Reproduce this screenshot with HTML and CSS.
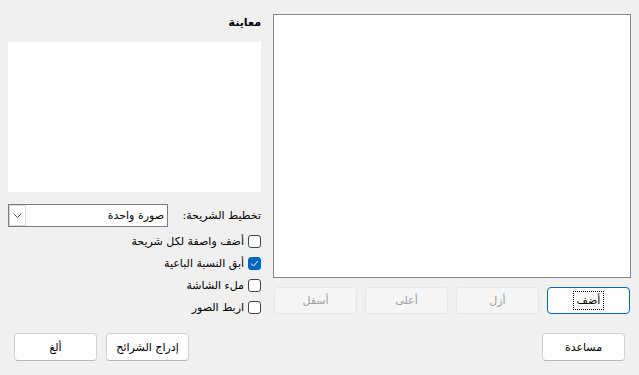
FILE: index.html
```html
<!DOCTYPE html>
<html lang="ar" dir="rtl">
<head>
<meta charset="utf-8">
<link rel="stylesheet" href="styles.css">
</head>
<body>
<div class="dialog">
  <div class="main">
    <div class="right-col">
      <div class="listbox"></div>
      <div class="btn-row">
        <button class="btn default"><span class="focus">أضف</span></button>
        <button class="btn disabled">أزل</button>
        <button class="btn disabled">أعلى</button>
        <button class="btn disabled">أسفل</button>
      </div>
    </div>
    <div class="left-col">
      <div class="heading">معاينة</div>
      <div class="preview"></div>
      <div class="layout-row">
        <span class="label">تخطيط الشريحة:</span>
        <div class="combo">
          <span class="combo-text">صورة واحدة</span>
          <span class="combo-btn"><svg width="9" height="5" viewBox="0 0 9 5"><path d="M0.5 0.5 L4.5 4.5 L8.5 0.5" fill="none" stroke="#555" stroke-width="1"/></svg></span>
        </div>
      </div>
      <div class="checks">
        <div class="check"><span class="box"></span><span>أضف واصفة لكل شريحة</span></div>
        <div class="check"><span class="box checked"><svg width="9" height="7" viewBox="0 0 9 7"><path d="M1 3.5 L3.5 6 L8 1" fill="none" stroke="#fff" stroke-width="1"/></svg></span><span>أبق النسبة الباعية</span></div>
        <div class="check"><span class="box"></span><span>ملء الشاشة</span></div>
        <div class="check"><span class="box"></span><span>اربط الصور</span></div>
      </div>
    </div>
  </div>
  <div class="footer">
    <button class="btn">مساعدة</button>
    <div class="footer-left">
      <button class="btn">إدراج الشرائح</button>
      <button class="btn">ألغ</button>
    </div>
  </div>
</div>
</body>
</html>
```
FILE: styles.css
```css
html, body {
  margin: 0;
  padding: 0;
  background: #f0f0f0;
}
body {
  width: 639px;
  height: 375px;
  overflow: hidden;
  font-family: "DejaVu Sans", "Noto Sans", sans-serif;
  font-size: 11px;
  color: #000;
}
.dialog {
  display: flex;
  flex-direction: column;
  height: 375px;
}
.main {
  display: flex;
  flex-direction: row;
  gap: 12px;
  padding: 14px 8px 0 8px;
}
.right-col {
  width: 358px;
  display: flex;
  flex-direction: column;
  gap: 9px;
}
.listbox {
  height: 262px;
  background: #fff;
  border: 1px solid #828790;
}
.btn-row {
  display: flex;
  justify-content: space-between;
  padding: 0 1px;
}
.btn {
  width: 83px;
  height: 27px;
  box-sizing: border-box;
  font-family: inherit;
  font-size: 11px;
  color: #000;
  background: #fdfdfd;
  border: 1px solid #d0d0d0;
  border-bottom-color: #b8b8b8;
  border-radius: 4px;
  padding: 0;
  display: flex;
  align-items: center;
  justify-content: center;
}
.btn.default {
  border: 1px solid #0067c0;
}
.btn.disabled {
  background: #f5f5f5;
  border-color: #e5e5e5;
  color: #a0a0a0;
}
.focus {
  border: 1px dotted #000;
  padding: 0 3px;
  line-height: 17px;
}
.left-col {
  width: 253px;
  display: flex;
  flex-direction: column;
}
.heading {
  font-weight: bold;
  height: 16px;
  line-height: 16px;
  margin-top: 1px;
}
.preview {
  margin-top: 11px;
  height: 150px;
  background: #fff;
}
.layout-row {
  margin-top: 12px;
  display: flex;
  align-items: center;
  justify-content: space-between;
  height: 23px;
}
.combo {
  width: 160px;
  height: 23px;
  box-sizing: border-box;
  background: #fff;
  border: 1px solid #7a7a7a;
  display: flex;
  align-items: center;
  justify-content: space-between;
}
.combo-text {
  padding-right: 3px;
}
.combo-btn {
  width: 17px;
  height: 21px;
  box-sizing: border-box;
  border: 1px solid #d9d9d9;
  background: #fff;
  display: flex;
  align-items: center;
  justify-content: center;
}
.checks {
  margin-top: 3px;
  display: flex;
  flex-direction: column;
}
.check {
  height: 22px;
  display: flex;
  align-items: center;
  gap: 4px;
}
.box {
  width: 13px;
  height: 13px;
  box-sizing: border-box;
  border: 1px solid #444;
  border-radius: 3px;
  background: #fff;
  display: flex;
  align-items: center;
  justify-content: center;
}
.box.checked {
  background: #0067c0;
  border-color: #0067c0;
}
.footer {
  margin-top: auto;
  padding: 0 14px 14px 14px;
  display: flex;
  justify-content: space-between;
}
.footer-left {
  display: flex;
  gap: 9px;
}
.footer .btn {
  height: 28px;
}
```
